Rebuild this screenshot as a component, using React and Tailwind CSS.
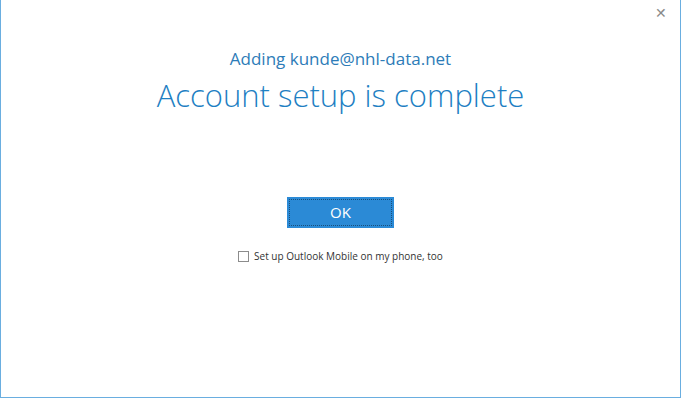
import React, { useState } from "react";

const App = () => {
  const [mobile, setMobile] = useState(false);

  return (
    <div className="w-[682px] h-[400px] bg-white overflow-hidden" style={{ fontFamily: "'Open Sans', 'Noto Sans', sans-serif" }}>
      <div className="relative w-[681px] h-[398px] border-l border-r border-b border-[#6aaee0] flex flex-col items-center">
        <button type="button" className="absolute right-[13px] top-[6px] text-[#8a8a8a] text-[14px] leading-none font-light">
          ✕
        </button>

        <div className="mt-[47px] text-[17px] leading-[24px] text-[#2d7cb8]">
          Adding kunde@nhl-data.net
        </div>
        <h1 className="mt-[4px] text-[31px] leading-[40px] font-light text-[#1e7fc3]">
          Account setup is complete
        </h1>

        <button
          type="button"
          className="mt-[82px] w-[107px] h-[31px] bg-[#2b8ad6] text-white text-[15px] outline-1 outline-dotted outline-offset-[-3px] outline-[#1a4f7a]"
        >
          OK
        </button>

        <label className="mt-[21px] flex items-center gap-[5px] text-[10px] text-[#333] cursor-pointer">
          <input
            type="checkbox"
            checked={mobile}
            onChange={(e) => setMobile(e.target.checked)}
            className="appearance-none w-[11px] h-[11px] border border-[#8c8c8c] bg-white"
          />
          Set up Outlook Mobile on my phone, too
        </label>
      </div>
    </div>
  );
};

export default App;
